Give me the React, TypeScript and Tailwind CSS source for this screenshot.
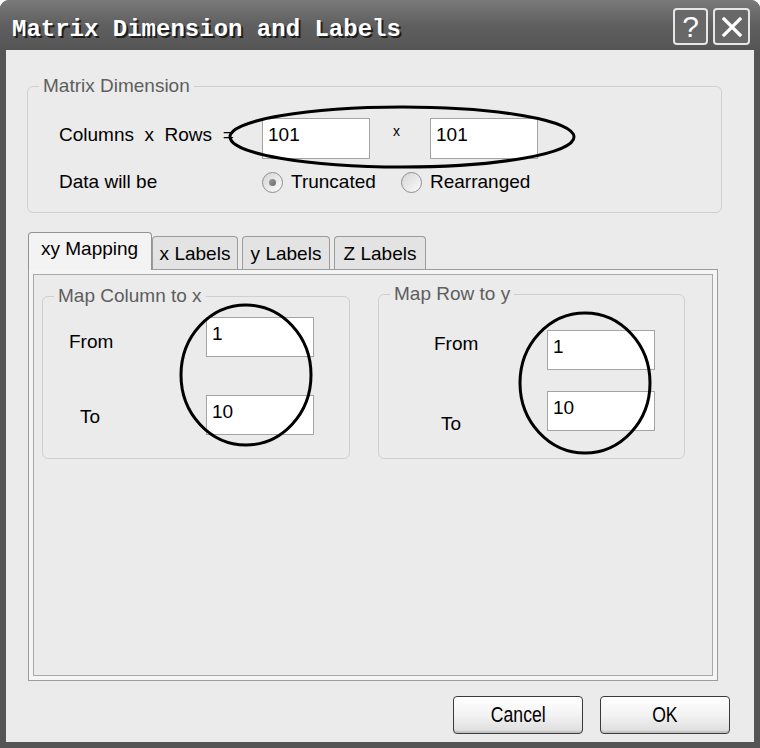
import React from 'react'

// Matrix Dimension and Labels dialog (XP style, greyscale scan)

const UI = "font-['Liberation_Sans',Arial,sans-serif]"

function TextBox({ value, h = 'h-[40px]' }: { value: string; h?: string }) {
  return (
    <div
      className={`${h} w-[108px] shrink-0 border border-[#a3a3a3] bg-white pl-[5px] pt-[5px] text-[19px] leading-[22px] text-black`}
    >
      {value}
    </div>
  )
}

function Radio({ checked = false }: { checked?: boolean }) {
  return (
    <div className="flex h-[21px] w-[21px] shrink-0 items-center justify-center rounded-full border border-[#8e8e8e] bg-gradient-to-br from-[#d6d6d6] to-[#fbfbfb]">
      {checked && <div className="h-[7px] w-[7px] rounded-full bg-gradient-to-br from-[#9a9a9a] to-[#6e6e6e]" />}
    </div>
  )
}

function GroupBox({
  legend,
  className,
  children,
}: {
  legend: string
  className: string
  children: React.ReactNode
}) {
  return (
    <fieldset className={`rounded-[6px] border border-[#cfcfcf] ${className}`}>
      <legend className="ml-[11px] px-[4px] text-[19px] leading-[22px] text-[#5e5e5e]">{legend}</legend>
      {children}
    </fieldset>
  )
}

function Row({
  label,
  value,
  className,
  labelClass,
}: {
  label: string
  value: string
  className: string
  labelClass: string
}) {
  return (
    <div className={`flex h-[40px] items-start ${className}`}>
      <span className={`shrink-0 text-[19px] leading-[22px] text-black ${labelClass}`}>{label}</span>
      <TextBox value={value} />
    </div>
  )
}

function Tab({ label, selected, className }: { label: string; selected?: boolean; className: string }) {
  if (selected) {
    return (
      <div
        className={`relative z-10 -mb-px h-[38px] rounded-t-[4px] border border-b-0 border-[#929292] bg-[#f3f3f3] pt-[5px] text-[19px] leading-[22px] text-black ${className}`}
      >
        {label}
      </div>
    )
  }
  return (
    <div
      className={`flex h-[33px] justify-center rounded-t-[4px] border border-b-0 border-[#9b9b9b] bg-[#e3e3e3] pt-[6px] text-[19px] leading-[22px] text-black ${className}`}
    >
      {label}
    </div>
  )
}

function Button({ label }: { label: string }) {
  return (
    <div className="flex h-[38px] w-[130px] items-center justify-center rounded-[4px] border border-[#3a3a3a] bg-gradient-to-b from-[#ffffff] via-[#f3f3f3] to-[#dcdcdc] shadow-[inset_0_-2px_0_#c4c4c4]">
      <span className="inline-block scale-x-[0.8] text-[22px] leading-none text-black">{label}</span>
    </div>
  )
}

export default function App() {
  return (
    <div className={`relative h-[748px] w-[760px] overflow-hidden bg-white ${UI}`}>
      <div className="flex h-full flex-col rounded-t-[9px] bg-[#555555]">
        {/* Title bar */}
        <div className="flex h-[50px] shrink-0 items-center rounded-t-[9px] bg-gradient-to-b from-[#7a7a7a] via-[#5f5f5f] to-[#555555]">
          <span className="pl-[12px] pt-[10px] font-['Liberation_Mono',monospace] text-[24px] font-bold leading-none text-white [text-shadow:2px_2px_0_#1e1e1e]">
            Matrix Dimension and Labels
          </span>
          <div className="ml-auto mr-[10px] mt-[3px] flex gap-[5px]">
            <div className="flex h-[37px] w-[35px] items-center justify-center rounded-[4px] border-2 border-[#e6e6e6] bg-[#686868] text-[30px] leading-none text-white">
              ?
            </div>
            <div className="flex h-[37px] w-[37px] items-center justify-center rounded-[4px] border-2 border-[#e6e6e6] bg-[#686868]">
              <svg width="22" height="22" viewBox="0 0 22 22" aria-hidden="true">
                <path d="M3 3L19 19M19 3L3 19" stroke="#ffffff" strokeWidth="3.2" strokeLinecap="square" />
              </svg>
            </div>
          </div>
        </div>

        {/* Client area */}
        <div className="mx-[6px] mb-[6px] flex flex-1 flex-col bg-[#ebebeb]">
          <GroupBox legend="Matrix Dimension" className="ml-[21px] mt-[25px] w-[695px] pb-[18px]">
            <div className="mt-[21px] flex h-[41px] items-start pl-[31px]">
              <span className="w-[203px] shrink-0 whitespace-pre pt-[6px] text-[19px] leading-[22px] text-black">
                {'Columns  x  Rows  ='}
              </span>
              <TextBox value="101" h="h-[41px]" />
              <span className="w-[60px] shrink-0 pl-[23px] pt-[2px] text-[14px] leading-[22px] text-black">x</span>
              <TextBox value="101" h="h-[41px]" />
            </div>
            <div className="mt-[11px] flex h-[24px] items-center pl-[31px] text-[19px] leading-[22px] text-black">
              <span className="w-[203px] shrink-0">Data will be</span>
              <div className="flex w-[139px] shrink-0 items-center gap-[8px]">
                <Radio checked />
                <span>Truncated</span>
              </div>
              <div className="flex items-center gap-[8px]">
                <Radio />
                <span>Rearranged</span>
              </div>
            </div>
          </GroupBox>

          {/* Tabs */}
          <div className="ml-[22px] mt-[19px] flex h-[37px] items-end">
            <Tab label="xy Mapping" selected className="w-[124px] pl-[12px]" />
            <Tab label="x Labels" className="w-[86px]" />
            <Tab label="y Labels" className="ml-[4px] w-[88px]" />
            <Tab label="Z Labels" className="ml-[4px] w-[92px]" />
          </div>
          <div className="ml-[22px] h-[412px] w-[690px] border border-[#9c9c9c] bg-[#f5f5f5] p-[4px]">
            <div className="flex h-full items-start border border-[#a9a9a9] bg-[#ebebeb]">
              <GroupBox legend="Map Column to x" className="ml-[8px] mt-[10px] w-[308px] pb-[23px]">
                <Row label="From" value="1" className="mt-[10px] pl-[26px]" labelClass="w-[137px] pt-[14px]" />
                <Row label="To" value="10" className="mt-[38px] pl-[37px]" labelClass="w-[126px] pt-[11px]" />
              </GroupBox>
              <GroupBox legend="Map Row to y" className="ml-[28px] mt-[8px] w-[307px] pb-[27px]">
                <Row label="From" value="1" className="mt-[25px] pl-[55px]" labelClass="w-[113px] pt-[3px]" />
                <Row label="To" value="10" className="mt-[21px] pl-[62px]" labelClass="w-[106px] pt-[22px]" />
              </GroupBox>
            </div>
          </div>

          {/* Buttons */}
          <div className="mt-[15px] flex justify-end gap-[17px] pr-[24px]">
            <Button label="Cancel" />
            <Button label="OK" />
          </div>
        </div>
      </div>

      {/* Hand-drawn annotation ellipses over the dialog */}
      <svg className="pointer-events-none absolute inset-0" width="760" height="748" aria-hidden="true">
        <ellipse cx="402" cy="137" rx="172" ry="30" fill="none" stroke="#000" strokeWidth="3" />
        <ellipse cx="246" cy="375" rx="65" ry="70" fill="none" stroke="#000" strokeWidth="3" />
        <ellipse cx="585" cy="383" rx="65" ry="70" fill="none" stroke="#000" strokeWidth="3" />
      </svg>
    </div>
  )
}
